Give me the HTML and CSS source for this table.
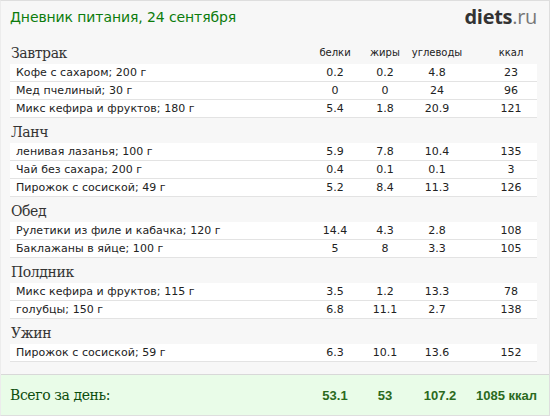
FILE: index.html
```html
<!DOCTYPE html>
<html>
<head>
<meta charset="utf-8">
<link rel="stylesheet" href="styles.css">
</head>
<body>
<div class="page">
  <header class="top">
    <h1 class="title">Дневник питания, 24 сентября</h1>
    <div class="logo"><b>diets</b>.ru</div>
  </header>

  <section class="meal">
    <div class="meal-head">
      <h2>Завтрак</h2><span>белки</span><span>жиры</span><span>углеводы</span><span class="kc">ккал</span>
    </div>
    <div class="row"><span class="name">Кофе с сахаром; 200 г</span><span>0.2</span><span>0.2</span><span>4.8</span><span class="kc">23</span></div>
    <div class="row"><span class="name">Мед пчелиный; 30 г</span><span>0</span><span>0</span><span>24</span><span class="kc">96</span></div>
    <div class="row"><span class="name">Микс кефира и фруктов; 180 г</span><span>5.4</span><span>1.8</span><span>20.9</span><span class="kc">121</span></div>
  </section>

  <section class="meal">
    <div class="meal-head"><h2>Ланч</h2></div>
    <div class="row"><span class="name">ленивая лазанья; 100 г</span><span>5.9</span><span>7.8</span><span>10.4</span><span class="kc">135</span></div>
    <div class="row"><span class="name">Чай без сахара; 200 г</span><span>0.4</span><span>0.1</span><span>0.1</span><span class="kc">3</span></div>
    <div class="row"><span class="name">Пирожок с сосиской; 49 г</span><span>5.2</span><span>8.4</span><span>11.3</span><span class="kc">126</span></div>
  </section>

  <section class="meal">
    <div class="meal-head"><h2>Обед</h2></div>
    <div class="row"><span class="name">Рулетики из филе и кабачка; 120 г</span><span>14.4</span><span>4.3</span><span>2.8</span><span class="kc">108</span></div>
    <div class="row"><span class="name">Баклажаны в яйце; 100 г</span><span>5</span><span>8</span><span>3.3</span><span class="kc">105</span></div>
  </section>

  <section class="meal">
    <div class="meal-head"><h2>Полдник</h2></div>
    <div class="row"><span class="name">Микс кефира и фруктов; 115 г</span><span>3.5</span><span>1.2</span><span>13.3</span><span class="kc">78</span></div>
    <div class="row"><span class="name">голубцы; 150 г</span><span>6.8</span><span>11.1</span><span>2.7</span><span class="kc">138</span></div>
  </section>

  <section class="meal">
    <div class="meal-head"><h2>Ужин</h2></div>
    <div class="row"><span class="name">Пирожок с сосиской; 59 г</span><span>6.3</span><span>10.1</span><span>13.6</span><span class="kc">152</span></div>
  </section>

  <footer class="total">
    <span class="total-label">Всего за день:</span><span>53.1</span><span>53</span><span>107.2</span><span class="kc-total">1085 ккал</span>
  </footer>
</div>
</body>
</html>
```

FILE: styles.css
```css
html, body {
  margin: 0;
  padding: 0;
}
body {
  background: #ffffff;
}
.page {
  width: 550px;
  height: 416px;
  box-sizing: border-box;
  background: #f7f7f7;
  border: 1px solid #dedede;
  border-left-color: #ececec;
  display: flex;
  flex-direction: column;
  overflow: hidden;
  font-family: "DejaVu Sans", Verdana, sans-serif;
}
.top {
  height: 38px;
  display: flex;
  justify-content: space-between;
  align-items: flex-start;
  padding: 0 12px 0 9px;
}
.title {
  margin: 8px 0 0;
  font-weight: normal;
  font-size: 14px;
  line-height: 17px;
  color: #0c7c0c;
  letter-spacing: -0.1px;
}
.logo {
  margin-top: 5px;
  font-family: "Open Sans", "DejaVu Sans", sans-serif;
  font-size: 20px;
  line-height: 22px;
  color: #777;
  letter-spacing: -0.3px;
}
.logo b {
  color: #333;
  font-weight: 700;
}
.meal {
  margin: 0 12px 0 9px;
}
.meal-head,
.row {
  display: grid;
  grid-template-columns: 1fr 50px 50px 54px 73px;
  align-items: center;
}
.meal-head {
  height: 25px;
  align-items: end;
  padding-bottom: 1px;
  box-sizing: border-box;
}
.meal-head h2 {
  margin: 0;
  font-family: "DejaVu Serif", Georgia, serif;
  font-weight: normal;
  font-size: 14px;
  line-height: 20px;
  color: #333;
  padding-left: 1px;
  letter-spacing: -0.4px;
}
.meal-head span {
  font-size: 10px;
  line-height: 16px;
  color: #222;
  text-align: center;
  padding-bottom: 2px;
}
.meal-head span.kc {
  padding-left: 21px;
}
.row {
  height: 18px;
  box-sizing: border-box;
  background: #ffffff;
  border-bottom: 1px solid #e3e3e3;
  font-size: 11px;
  letter-spacing: 0.05px;
  color: #222;
}
.row span {
  text-align: center;
  white-space: nowrap;
}
.row .name {
  text-align: left;
  padding-left: 6px;
}
.row .kc {
  padding-left: 21px;
}
.total {
  margin-top: auto;
  height: 41px;
  box-sizing: border-box;
  background: #e9fce8;
  border-top: 1px solid #d8d8d8;
  display: grid;
  grid-template-columns: 1fr 50px 50px 60px 67px;
  align-items: center;
  padding: 0 12px 0 9px;
  font-family: "Liberation Sans", Arial, sans-serif;
  font-weight: bold;
  font-size: 13px;
  color: #2b6a1d;
}
.total span {
  text-align: center;
}
.total .total-label {
  text-align: left;
  font-family: "DejaVu Serif", Georgia, serif;
  font-weight: normal;
  font-size: 14px;
  letter-spacing: -0.4px;
  color: #0d4d0d;
}
.total .kc-total {
  text-align: right;
}
```
